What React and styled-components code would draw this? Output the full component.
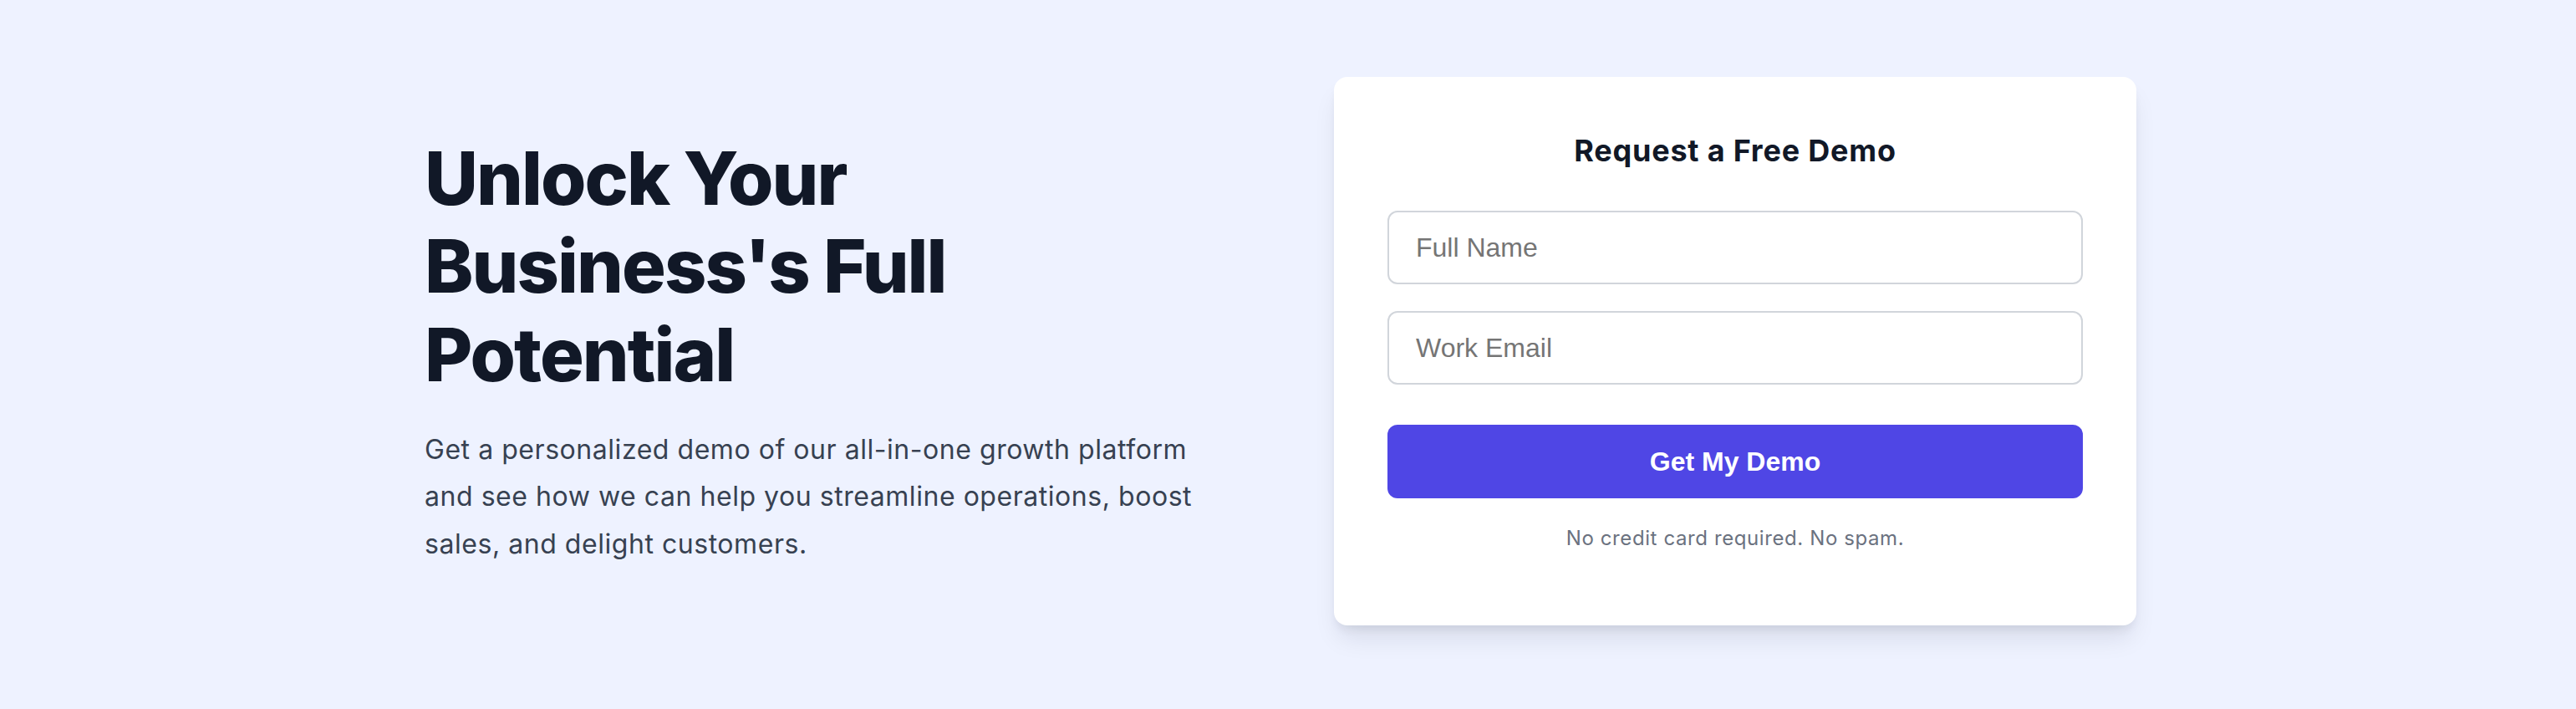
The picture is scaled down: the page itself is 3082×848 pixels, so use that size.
import React from "react";
import styled, { createGlobalStyle } from "styled-components";

const GlobalStyle = createGlobalStyle`
  html, body {
    margin: 0;
    padding: 0;
    background: #eef2ff;
  }
  body {
    font-family: Inter, "Noto Sans", sans-serif;
  }
  * {
    box-sizing: border-box;
  }
`;

const App = () => {
  return (
    <>
      <GlobalStyle />
      <Section>
        <Container>
          <Intro>
            <Title>Unlock Your Business's Full Potential</Title>
            <Lead>
              Get a personalized demo of our all-in-one growth platform and see
              how we can help you streamline operations, boost sales, and
              delight customers.
            </Lead>
          </Intro>
          <Card>
            <CardTitle>Request a Free Demo</CardTitle>
            <Form onSubmit={(e) => e.preventDefault()}>
              <Field type="text" placeholder="Full Name" />
              <Field type="email" placeholder="Work Email" />
              <Submit type="submit">Get My Demo</Submit>
            </Form>
            <Note>No credit card required. No spam.</Note>
          </Card>
        </Container>
      </Section>
    </>
  );
};

const Section = styled.section`
  width: 100%;
  min-height: 848px;
  background: #eef2ff;
  padding: 92px 18px 92px 0;
`;

const Container = styled.div`
  width: 2048px;
  margin: 0 auto;
  display: grid;
  grid-template-columns: 1fr 1fr;
  column-gap: 128px;
  align-items: center;
`;

const Intro = styled.div`
  display: flex;
  flex-direction: column;
`;

const Title = styled.h1`
  margin: 0;
  font-size: 88px;
  line-height: 1.2;
  font-weight: 800;
  letter-spacing: -0.022em;
  color: #111827;
`;

const Lead = styled.p`
  margin: 32px 0 0;
  max-width: 930px;
  font-size: 32px;
  line-height: 56.5px;
  letter-spacing: 0.017em;
  color: #374151;
`;

const Card = styled.div`
  width: 960px;
  background: #ffffff;
  border-radius: 16px;
  padding: 62px 64px 88px;
  box-shadow: 0 20px 30px -6px rgba(17, 24, 39, 0.1),
    0 8px 12px -4px rgba(17, 24, 39, 0.08);
`;

const CardTitle = styled.h2`
  margin: 0 0 46px;
  text-align: center;
  font-size: 36px;
  line-height: 52px;
  font-weight: 700;
  letter-spacing: 0.022em;
  color: #111827;
`;

const Form = styled.form`
  display: flex;
  flex-direction: column;
`;

const Field = styled.input`
  height: 88px;
  width: 100%;
  margin-bottom: 32px;
  padding: 0 32px;
  border: 2px solid #d1d5db;
  border-radius: 12px;
  background: #fff;
  font-family: "Liberation Sans", Arial, sans-serif;
  font-size: 32px;
  color: #111827;
  outline: none;

  &::placeholder {
    color: #757575;
  }

  &:last-of-type {
    margin-bottom: 48px;
  }
`;

const Submit = styled.button`
  height: 88px;
  width: 100%;
  border: none;
  border-radius: 12px;
  background: #4f46e5;
  color: #fff;
  font-family: "Liberation Sans", Arial, sans-serif;
  font-size: 32px;
  font-weight: 700;
  cursor: pointer;
`;

const Note = styled.p`
  margin: 32px 0 0;
  text-align: center;
  font-size: 24px;
  line-height: 32px;
  letter-spacing: 0.025em;
  color: #6b7280;
`;

export default App;
